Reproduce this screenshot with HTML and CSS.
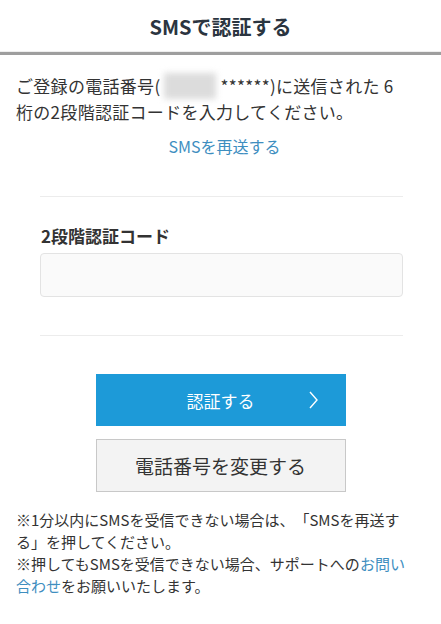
FILE: index.html
```html
<!DOCTYPE html>
<html lang="ja">
<head>
    <meta charset="UTF-8" />
    <title>SMSで認証する</title>
    <link rel="stylesheet" href="styles.css">
</head>
<body>

<div class="header">
    <h1>SMSで認証する</h1>
</div>

<div class="intro">
    <p>ご登録の電話番号(<span class="masked"></span>******)に送信された 6<br>桁の2段階認証コードを入力してください。</p>
    <a href="#" class="resend">SMSを再送する</a>
</div>

<div class="form">
    <label for="code">2段階認証コード</label>
    <input type="text" id="code" />
</div>

<div class="actions">
    <button class="btn-primary">認証する
        <svg class="chevron" width="9" height="18" viewBox="0 0 9 18"><path d="M1 1 L8 9 L1 17" fill="none" stroke="#fff" stroke-width="1.4"/></svg>
    </button>
    <button class="btn-secondary">電話番号を変更する</button>
</div>

<div class="notes">
    <p>※1分以内にSMSを受信できない場合は、「SMSを再送す<br>る」を押してください。</p>
    <p>※押してもSMSを受信できない場合、サポートへの<a href="#">お問い<br>合わせ</a>をお願いいたします。</p>
</div>

</body>
</html>
```

FILE: styles.css
```css
body {
  margin: 0;
  font-family: "Noto Sans CJK JP", "Noto Sans", sans-serif;
  color: #333;
  background-color: white;
  text-spacing-trim: space-all;
}

.header {
  height: 52px;
  display: flex;
  align-items: center;
  justify-content: center;
  border-bottom: 3px solid #9e9e9e;
  box-shadow: 0 -1px 0 #eee inset;
}

.header h1 {
  margin: 0;
  font-size: 20px;
  font-weight: bold;
  color: #2b3540;
}

.intro {
  padding: 18px 8px 0 16px;
}

.intro p {
  margin: 0;
  font-size: 17px;
  line-height: 26px;
  letter-spacing: 0.3px;
}

.masked {
  display: inline-block;
  width: 52px;
  height: 26px;
  margin: 0 4px -6px 4px;
  background-color: #dcdcdc;
  filter: blur(3px);
}

.resend {
  display: block;
  margin-top: 8px;
  text-align: center;
  font-size: 16px;
  line-height: 26px;
  color: #3e8ebf;
  text-decoration: none;
}

.form {
  margin: 37px 38px 0 40px;
  padding: 27px 0 38px;
  border-top: 1px solid #ececec;
  border-bottom: 1px solid #ececec;
}

.form label {
  display: block;
  padding-left: 1px;
  font-size: 17px;
  font-weight: bold;
  line-height: 24px;
  margin-bottom: 5px;
}

.form input {
  display: block;
  box-sizing: border-box;
  width: 100%;
  height: 44px;
  background-color: #fafafa;
  border: 1px solid #e3e3e3;
  border-radius: 4px;
}

.actions {
  display: flex;
  flex-direction: column;
  align-items: center;
  gap: 13px;
  margin-top: 38px;
}

.actions button {
  width: 250px;
  font-family: inherit;
  cursor: pointer;
}

.btn-primary {
  position: relative;
  height: 52px;
  background-color: #1d9ad8;
  color: white;
  border: none;
  font-size: 17px;
}

.chevron {
  position: absolute;
  right: 28px;
  top: 17px;
}

.btn-secondary {
  height: 53px;
  background-color: #f3f3f3;
  color: #333;
  border: 1px solid #c8c8c8;
  font-size: 19px;
}

.notes {
  padding: 17px 8px 0 16px;
}

.notes p {
  margin: 0;
  font-size: 15px;
  line-height: 22px;
}

.notes a {
  color: #3e8ebf;
  text-decoration: none;
}
```
